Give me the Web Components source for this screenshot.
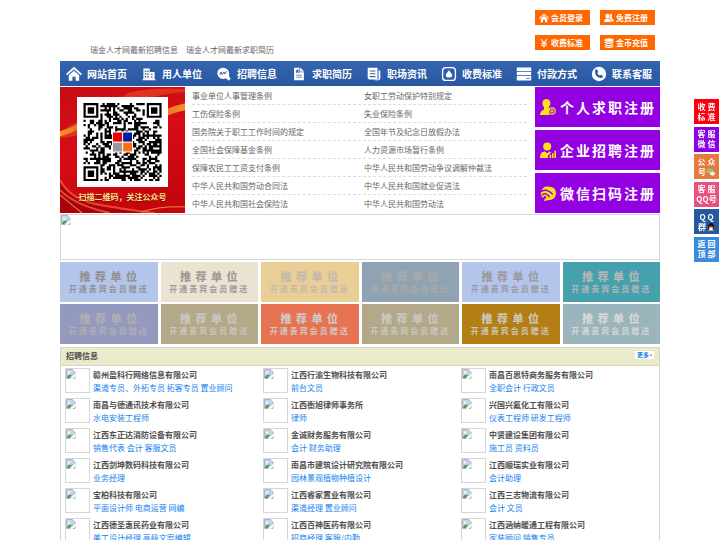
<!DOCTYPE html>
<html lang="zh-CN">
<head>
<meta charset="utf-8">
<title>瑞金人才网</title>
<style>
html{scrollbar-width:none}
body{margin:0;background:#fff;font:8px/12px "Noto Sans CJK SC",sans-serif;color:#666}
</style>
</head>
<body>
<talent-page></talent-page>
<script>
const define=(name,html,setup)=>customElements.define(name,class extends HTMLElement{
  constructor(){
    super();
    const t=document.createElement('template');
    t.innerHTML='<style>*{box-sizing:border-box}a{color:inherit;text-decoration:none}svg{display:block}</style>'+html;
    this.attachShadow({mode:'open'}).append(t.content.cloneNode(true));
  }
  connectedCallback(){if(setup&&!this.ready){this.ready=true;setup.call(this,this.shadowRoot);}}
});

const icons={
  home:'<path d="M0 10 10 1l10 9-1.500 1.700L10 4.200l-8.500 7.500z"/><path d="m3.500 11.500 6.500-5.700 6.500 5.700V18.500h-4.500v-5H8v5H3.500z"/>',
  building:'<path fill-rule="evenodd" d="M2 17V2h9v5h7v10h1v2H1v-2zM4 5v2h2V5zm3.500 0v2h2V5zM4 9v2h2V9zm3.500 0v2h2V9zM4 13v2h2v-2zm3.500 0v2h2v-2zM13 9.500v2h2v-2zm0 4v2h2v-2z"/>',
  chat:'<path d="M8.500 1a8 8 0 1 0 0 16c2 0 3-.4 4-1l5 3.500-1-5c3-7-1-13.500-8-13.500z"/><path d="m13 11 5 7" stroke="#fff" stroke-width="4"/><path d="m4 11 2-4 1 4 3-4 1 3 3-4" fill="none" stroke="#2b5ba5" stroke-width="1.300"/>',
  resume:'<path fill-rule="evenodd" d="M3 1h9l5 5v13H3zM6 4v5h1V7l3 2h1L9 6l1-2zm0 7v1h8v-1zm0 3v1h8v-1z"/><path d="M11 1v6h6" fill="none" stroke="#2b5ba5"/>',
  news:'<path fill-rule="evenodd" d="M1 1h14v17H3l-2-2zM4 5v1.500h8V5zm0 4v1.500h8V9zm0 4v1.500h8V13z"/><path d="M16.500 5H19v12l-2 2h-6v-1h5.500z"/>',
  price:'<rect x="2" y="2" width="16" height="16" rx="4" fill="none" stroke="#fff" stroke-width="1.700"/><path d="M10 5c1 3 4 4 4 6.500q0 3-4 3t-4-3C6 9 9 8 10 5z"/>',
  card:'<path d="M1 2h18v4.500H1zm0 5.500h18v4H1zm0 5h18v5.500H1z"/><path d="M13 15.500h4" stroke="#2b5ba5"/>',
  phone:'<circle cx="10" cy="10" r="9"/><path d="M5 6q1-3 3-1l1 2-1 2q1 2 3 3l2-1 2 2q0 2-3 2-7-1-7-9z" fill="#2b5ba5"/>',
  users:'<circle cx="7" cy="6" r="4.500"/><path d="M0 18q0-6 5-7h4q5 1 5 7zM12 1q5 0 4 6l-1 3q4 1 5 7h-5q0-5-4-7 3-4 1-9z"/>',
  yen:'<path d="m4 2 6 8 6-8M10 10v9M4 10.500h12M4 14.500h12" fill="none" stroke="#fff" stroke-width="2.200"/>',
  coins:'<ellipse cx="10" cy="4" rx="9" ry="3.500"/><path d="M1 6.500q9 5 18 0v3q-9 5-18 0zm1 5q8 5 16 0v3q-8 5-16 0zm-1 4.500q9 4 18 0v2q-9 4-18 0z"/>',
  person:'<ellipse cx="8" cy="5.500" rx="5" ry="5.500"/><path d="M5 9h6v3l2 1q-4 3-1 7H0q0-5 5-7z"/><circle cx="15" cy="15" r="4" fill="none" stroke="#ffde20" stroke-width="1.500"/><path d="M15 12.500v5M12.500 15h5" stroke="#ffde20" stroke-width="1.300"/>',
  company:'<circle cx="9" cy="5.500" r="5"/><path d="M0 20q0-8 6-8l3 2 3-2 2 1-4 4v3zM12 16h2v4h-2zm3-2h2v6h-2zm3-3h2v9h-2z"/>',
  wifi:'<path d="M7 2q13-1 13 8 0 9-10 9l-5 1 1-3q-6-2-5-7 1-6 6-8z"/><path d="M0 9q8-6 16 3M2 13q5-5 10 2" fill="none" stroke="#9300e2" stroke-width="1.700"/><circle cx="6" cy="15.500" r="1.800" fill="#9300e2"/>'
};
define('ui-icon','<style>:host{display:block;width:var(--icon,16px);height:var(--icon,16px);flex:none}svg{width:100%;height:100%}</style><svg viewBox="0 0 20 20" fill="currentColor" aria-hidden="true"></svg>',function(r){
  r.querySelector('svg').innerHTML=icons[this.getAttribute('name')];
});
define('quick-link','<style>:host{display:block;color:#fff;--icon:10px}a{display:flex;align-items:center;gap:2px;height:15px;padding:0 4px;background:#ff6700;font-weight:bold}</style><a href="#"><slot name="icon"></slot><slot></slot></a>');
define('site-header',`<style>:host{display:flex;justify-content:space-between;height:61px;padding:10px 5px 5px 30px}
nav{display:flex;gap:8px;align-self:flex-end}
.quick{display:grid;grid-template-columns:55px 55px;gap:10px;align-self:start}</style>
<nav><a href="#">瑞金人才网最新招聘信息</a><a href="#">瑞金人才网最新求职简历</a></nav>
<div class="quick"><quick-link><ui-icon slot="icon" name="home"></ui-icon>会员登录</quick-link><quick-link><ui-icon slot="icon" name="users"></ui-icon>免费注册</quick-link><quick-link><ui-icon slot="icon" name="yen"></ui-icon>收费标准</quick-link><quick-link><ui-icon slot="icon" name="coins"></ui-icon>金币充值</quick-link></div>`);
define('nav-item','<style>:host{display:block}a{display:grid;grid-template-columns:16px auto;justify-content:start;justify-items:center;align-items:center;gap:5px;height:25px;padding-left:6px;font-weight:bold;font-size:10px}</style><a href="#"><slot name="icon"></slot><span><slot></slot></span></a>');
define('main-nav','<style>:host{display:block;color:#fff;background:linear-gradient(#3565af,#2857a0)}nav{display:grid;grid-template-columns:repeat(8,1fr)}</style><nav></nav>',function(r){
  r.querySelector('nav').innerHTML=[['home','网站首页'],['building','用人单位'],['chat','招聘信息'],['resume','求职简历'],['news','职场资讯'],['price','收费标准'],['card','付款方式'],['phone','联系客服']]
    .map(([i,t])=>`<nav-item><ui-icon slot="icon" name="${i}" style="--icon:${/building|resume|chat|news/.test(i)?14:16}px"></ui-icon>${t}</nav-item>`).join('');
});

define('qr-code','<style>:host{display:block;background:#fff;padding:6px}svg{width:100%;height:100%}</style><svg viewBox="0 0 37 37" role="img"></svg>',function(r){
  const n=37;let s=20477,d='';
  const finder=(x,y)=>{
    for(const [a,b] of [[0,0],[n-7,0],[0,n-7]]){
      if(x>=a-1&&x<=a+7&&y>=b-1&&y<=b+7){
        const m=Math.max(Math.abs(x-a-3),Math.abs(y-b-3));
        return m===3||m<=1;
      }
    }
    return null;
  };
  for(let y=0;y<n;y++)for(let x=0;x<n;x++){
    s^=s<<13;s^=s>>>17;s^=s<<5;
    const f=finder(x,y);
    if(f===null?(s>>>9)%100<50:f)d+=`M${x} ${y}h1.050v1.050h-1.050z`;
  }
  r.querySelector('svg').innerHTML=`<path d="${d}"/><path fill="#fff" d="M13.500 13.500h10v10h-10z"/><path fill="#f00000" d="M14 14h4.300v4.300H14z"/><path fill="#001a9c" d="M18.800 14H23v4.300h-4.200z"/><path fill="#999" d="M14 18.800h4.300V23H14z"/><path fill="#ff6f10" d="M18.800 18.800H23V23h-4.200z"/>`;
});
define('qr-poster',`<style>:host{display:grid;position:relative;overflow:hidden;background:#cc0714}
.bg{position:absolute;inset:0;width:100%;height:100%}
figure{position:relative;margin:0;padding-top:10px;display:flex;flex-direction:column;align-items:center;gap:4px}
qr-code{width:91px;height:90px}
figcaption{color:#ffe28c;font-weight:bold;text-shadow:0 1px 1px #7d0800}</style>
<svg class="bg" viewBox="0 0 125 125" preserveAspectRatio="none"><defs><linearGradient id="g" x2=".3" y2="1"><stop stop-color="#c80c14"/><stop offset=".5" stop-color="#d80d16"/><stop offset="1" stop-color="#c5060f"/></linearGradient><linearGradient id="o"><stop stop-color="#f09a2c"/><stop offset=".4" stop-color="#e03018"/><stop offset="1" stop-color="#f0902a"/></linearGradient></defs><path fill="url(#g)" d="M0 0h125v125H0z"/><path d="M0 45Q12 36 25 32L70 5Q95 0 125 2v3Q80 8 50 30T0 50z" fill="#e2321b"/><path d="M0 44Q14 40 22 33V40Q12 46 0 49zM106 22q10-4 19-6v7q-10 2-19 6z" fill="url(#o)"/><path d="M0 94q10 16 34 21t50 10H0z" fill="#a90012"/><path d="M0 92q10 20 40 25t55 8M0 102q14 15 50 23" stroke="#e8492a" stroke-width="2" fill="none"/><path d="M0 107q12 10 22 18M125 119q-25-1-44 5" stroke="#f08a34" fill="none"/></svg>
<figure><qr-code></qr-code><figcaption>扫描二维码，关注公众号</figcaption></figure>`);
define('law-list','<style>:host{display:block}ul{margin:0;padding:0;list-style:none}li{display:grid;grid-template-columns:172px 1fr;height:18px;line-height:17px;border-bottom:1px dashed #ddd}li:last-child{border:0}</style><ul></ul>',function(r){
  r.querySelector('ul').innerHTML=[['事业单位人事管理条例','女职工劳动保护特别规定'],['工伤保险条例','失业保险条例'],['国务院关于职工工作时间的规定','全国年节及纪念日放假办法'],['全国社会保障基金条例','人力资源市场暂行条例'],['保障农民工工资支付条例','中华人民共和国劳动争议调解仲裁法'],['中华人民共和国劳动合同法','中华人民共和国就业促进法'],['中华人民共和国社会保险法','中华人民共和国劳动法']]
    .map(p=>`<li>${p.map(t=>`<a href="#">${t}</a>`).join('')}</li>`).join('');
});
define('register-link','<style>:host{display:grid;color:#fff;background:#9300e2}a{display:flex;align-items:center;gap:4px;padding-left:5px;font-size:14px;line-height:20px;font-weight:bold;letter-spacing:2px;white-space:nowrap}::slotted(ui-icon){color:#ffde20}</style><a href="#"><slot name="icon"></slot><slot></slot></a>');
define('intro-panel',`<style>:host{display:grid;grid-template-columns:125px 1fr 125px;gap:7px;margin-top:1px;height:125px}
.reg{display:grid;grid-template-rows:repeat(3,1fr);gap:3px}law-list{margin-right:1px}</style>
<qr-poster></qr-poster><law-list></law-list><div class="reg"><register-link><ui-icon slot="icon" name="person"></ui-icon>个人求职注册</register-link><register-link><ui-icon slot="icon" name="company"></ui-icon>企业招聘注册</register-link><register-link><ui-icon slot="icon" name="wifi"></ui-icon>微信扫码注册</register-link></div>`);
define('missing-image','<style>:host{display:block;border:1px solid #d3d7d6;overflow:hidden}svg{width:10px;height:10px}</style><svg viewBox="0 0 10 10" aria-hidden="true"><path d="M.500.500h6L9 3v6.500H.500z" fill="#c6d6f2" stroke="#aeb4ba"/><path d="M6.500.500V3H9z" fill="#fff" stroke="#aeb4ba" stroke-width=".6"/><path d="M1 9q1-4 4-3l2-1L3.500 9z" fill="#4f9d42"/><circle cx="3" cy="3.500" r="1" fill="#fff"/><path d="m4 10 5.500-5.500V7L6.500 10z" fill="#fff"/></svg>');
define('promo-tile',`<style>:host{display:block}a{display:flex;flex-direction:column;align-items:center;height:40px;padding-top:7px;color:var(--ink);background:var(--fill);font-weight:bold;white-space:pre}
b{font-size:11px;line-height:14px;letter-spacing:1px}span{letter-spacing:2px}</style><a href="#"><b>推 荐 单 位</b><span>开通贵宾会员赠送</span></a>`,function(){
  this.style.setProperty('--fill',this.getAttribute('fill'));
  this.style.setProperty('--ink',this.getAttribute('ink'));
});
define('promo-grid','<style>:host{display:grid;grid-template-columns:repeat(6,1fr);gap:2px 3px}</style><slot></slot>');
define('company-item','<style>:host{display:grid;grid-template-columns:25px 1fr;gap:3px;height:30px}missing-image{height:25px}h3{margin:1px 0 0;font-size:8px;line-height:12px;color:#505050}a{display:block;white-space:nowrap}p{margin:0;line-height:13px;color:#1482ee}</style><missing-image></missing-image><div><h3><a href="#"><slot name="company"></slot></a></h3><p><a href="#"><slot></slot></a></p></div>');
define('job-board',`<style>:host{display:block;margin-top:3px;border:1px solid #d6d6c8}
header{display:flex;justify-content:space-between;height:18px;padding:0 5px;background:#ebebcb;border-bottom:1px solid #d6d6c8}
h2{margin:0;font-size:8px;line-height:16px;color:#505050}
.more{display:flex;align-items:center;gap:1px;align-self:flex-start;margin-top:3px;height:8px;padding:0 2px;border-radius:1px;background:#fff;color:#1482ee;font-size:6px;line-height:8px;font-weight:bold}
i{width:2px;height:2px;background:#e69aa3}
.items{display:grid;grid-template-columns:repeat(3,1fr);padding:2px 0 0 4px}</style>
<header><h2>招聘信息</h2><a class="more" href="#">更多<i></i></a></header><div class="items"></div>`,function(r){
  r.querySelector('.items').innerHTML=[['赣州盈科行网络信息有限公司','渠道专员、外拓专员 拓客专员 置业顾问'],['江西行渝生物科技有限公司','前台文员'],['南昌百思特商务服务有限公司','全职会计 行政文员'],['南昌与德通讯技术有限公司','水电安装工程师'],['江西衡旭律师事务所','律师'],['兴国兴氟化工有限公司','仪表工程师 研发工程师'],['江西东正达消防设备有限公司','销售代表 会计 客服文员'],['金诚财务服务有限公司','会计 财务助理'],['中贤建设集团有限公司','施工员 资料员'],['江西剑坤数码科技有限公司','业务经理'],['南昌市建筑设计研究院有限公司','园林景观植物种植设计'],['江西顺瑞实业有限公司','会计助理'],['宝柏科技有限公司','平面设计师 电商运营 网编'],['江西睿家置业有限公司','渠道经理 置业顾问'],['江西三志物流有限公司','会计 文员'],['江西德圣惠民药业有限公司','美工设计经理 高级文案编辑'],['江西百神医药有限公司','招商经理 客服/内勤'],['江西涵纳暖通工程有限公司','家装顾问 销售专员']]
    .map(([c,j])=>`<company-item><span slot="company">${c}</span>${j}</company-item>`).join('');
});
define('side-bar',`<style>:host{position:fixed;right:1px;top:99px;width:25px;height:163px;display:flex;flex-direction:column;justify-content:space-between;color:#fff;font-weight:bold;line-height:10px}
a{display:flex;flex-direction:column;justify-content:center;height:25px;background:var(--c)}
span{display:flex;align-items:center;justify-content:center;gap:1px}svg{width:8px;height:8px}</style>
<a href="#" style="--c:#f9000d"><span>收 费</span><span>标 准</span></a>
<a href="#" style="--c:#8b00df"><span>客 服</span><span>微 信</span></a>
<a href="#" style="--c:#e47a3d"><span>公 众</span><span>号<svg viewBox="0 0 8 8"><ellipse cx="3" cy="3" rx="3" ry="2.500" fill="#8ed878"/><ellipse cx="5.500" cy="5.500" rx="2.500" ry="2" fill="#fff"/><path d="M2 2.500h.6M4 2.500h.6M4.500 5h.6M6.200 5h.6" stroke="#506b43"/></svg></span></a>
<a href="#" style="--c:#e65180"><span>客 服</span><span>QQ号</span></a>
<a href="#" style="--c:#2658a2"><span>Q Q</span><span>群<svg viewBox="0 0 8 8"><ellipse cx="4" cy="4" rx="3" ry="4" fill="#14141c"/><ellipse cx="4" cy="5.500" rx="2" ry="2" fill="#fff"/><path d="M1.500 4h5" stroke="#e3262a"/><path d="M1 7.500h6" stroke="#e9a02c"/></svg></span></a>
<a href="#" style="--c:#3989df"><span>返 回</span><span>顶 部</span></a>`);
define('talent-page',`<style>:host{display:block;padding:0 60px}.ad{margin:2px 0;height:46px}</style>
<site-header></site-header><main-nav></main-nav><main><intro-panel></intro-panel><missing-image class="ad"></missing-image><promo-grid></promo-grid><job-board></job-board></main><side-bar></side-bar>`,function(r){
  r.querySelector('promo-grid').innerHTML=[['#b4c5ec','#929292'],['#ebe3d2','#a19b98'],['#e9ce96','#c3baad'],['#8fa3b2','#aaa9a9'],['#b4c5ec','#9b9b9f'],['#45a1ad','#b5b5b5'],['#9499c0','#b2adb0'],['#b3a888','#c8c6c1'],['#e77352','#d0c7c4'],['#b3a888','#c8c6c1'],['#b37f15','#cbc5b9'],['#9bb5bc','#d5d5d5']]
    .map(([f,i])=>`<promo-tile fill="${f}" ink="${i}"></promo-tile>`).join('');
});
</script>
</body>
</html>
